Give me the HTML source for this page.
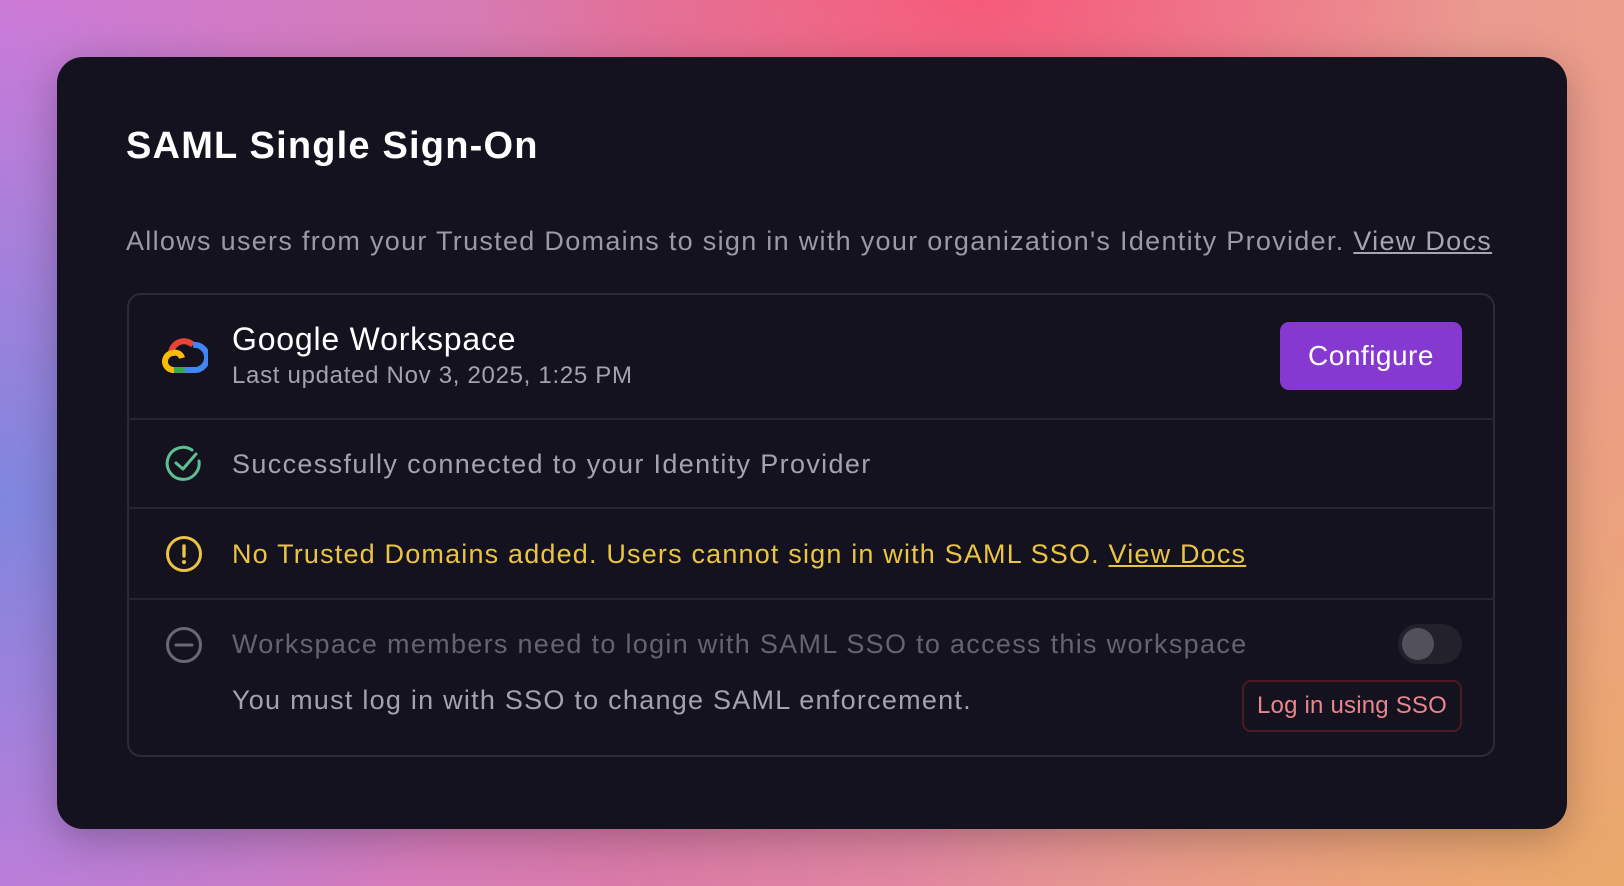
<!DOCTYPE html>
<html><head><meta charset="utf-8"><style>
*{margin:0;padding:0;box-sizing:border-box}
body{width:1624px;height:886px;overflow:hidden;font-family:"Liberation Sans",sans-serif;position:relative;
background:
radial-gradient(ellipse 500px 260px at 980px 0px,#f65a7a 0%,rgba(246,90,122,0) 100%),
radial-gradient(ellipse 700px 600px at 1624px 886px,#eaa86a 0%,rgba(234,168,106,0) 100%),
radial-gradient(ellipse 600px 500px at 0px 500px,#7f86de 0%,rgba(127,134,222,0) 100%),
linear-gradient(90deg,#cc7ad8 0%,#d97aa6 40%,#e6909a 70%,#ec9e8a 100%);}
.card{position:absolute;left:57px;top:57px;width:1510px;height:772px;background:#13121e;border-radius:26px;box-shadow:0 10px 40px rgba(0,0,0,.25)}
h1{position:absolute;left:126px;top:125px;font-size:38px;font-weight:bold;color:#fff;letter-spacing:1.2px}
.desc{position:absolute;left:126px;top:226px;font-size:27px;color:#9b99a8;white-space:nowrap;letter-spacing:1.3px}
.desc u{color:#a7a5b3}
.box{position:absolute;left:127px;top:293px;width:1368px;height:464px;border:2px solid #2c2b38;border-radius:14px}
.line{position:absolute;left:127px;width:1368px;height:2px;background:#25242f}
.t{position:absolute;white-space:nowrap}
.ic{position:absolute}
</style></head><body>
<div class="card"></div>
<h1>SAML Single Sign-On</h1>
<div class="desc">Allows users from your Trusted Domains to sign in with your organization's Identity Provider. <u>View Docs</u></div>
<div class="box"></div>
<div class="line" style="top:418px"></div>
<div class="line" style="top:507px"></div>
<div class="line" style="top:598px"></div>
<svg class="ic" style="left:160px;top:336px" width="48" height="40" viewBox="0 0 48 40">
<path d="M11 17 A13 13 0 0 1 33 9" stroke="#ea4335" stroke-width="6" fill="none"/>
<path d="M33 9 A11 11 0 0 1 36 34 L25 34" stroke="#4285f4" stroke-width="6" fill="none"/>
<path d="M25 34 L14 34" stroke="#34a853" stroke-width="6" fill="none"/>
<path d="M14 34 A8.5 8.5 0 0 1 13 17 A7 7 0 0 1 22 22" stroke="#fbbc05" stroke-width="6" fill="none"/>
</svg>
<div class="t" style="left:232px;top:321px;font-size:32px;color:#fff;letter-spacing:0.8px">Google Workspace</div>
<div class="t" style="left:232px;top:362px;font-size:24px;color:#a4a2b0;letter-spacing:0.7px">Last updated Nov 3, 2025, 1:25 PM</div>
<div style="position:absolute;left:1280px;top:322px;width:182px;height:68px;background:#8639d0;border-radius:9px;color:#fff;font-size:28px;line-height:68px;text-align:center;letter-spacing:0.5px">Configure</div>
<svg class="ic" style="left:164px;top:444px" width="40" height="40" viewBox="0 0 40 40"><path d="M35 17 A16 16 0 1 1 28 6" stroke="#5fbf93" stroke-width="3" fill="none" stroke-linecap="round"/><path d="M12 19 L19 25 L32 10" stroke="#5fbf93" stroke-width="3" fill="none" stroke-linecap="round" stroke-linejoin="round"/></svg>
<div class="t" style="left:232px;top:449px;font-size:27px;color:#a4a2b0;letter-spacing:1.35px">Successfully connected to your Identity Provider</div>
<svg class="ic" style="left:164px;top:535px" width="40" height="40" viewBox="0 0 40 40"><circle cx="20" cy="19" r="16.5" stroke="#ecc443" stroke-width="3" fill="none"/><path d="M20 11 V21" stroke="#ecc443" stroke-width="3.4" stroke-linecap="round"/><circle cx="20" cy="27" r="2" fill="#ecc443"/></svg>
<div class="t" style="left:232px;top:539px;font-size:27px;color:#ecc443;letter-spacing:1.18px">No Trusted Domains added. Users cannot sign in with SAML SSO. <u>View Docs</u></div>
<svg class="ic" style="left:164px;top:626px" width="40" height="40" viewBox="0 0 40 40"><circle cx="20" cy="19" r="16.5" stroke="#6a6875" stroke-width="3" fill="none"/><path d="M12 19 H28" stroke="#6a6875" stroke-width="3" stroke-linecap="round"/></svg>
<div class="t" style="left:232px;top:629px;font-size:27px;color:#65636f;letter-spacing:1.3px">Workspace members need to login with SAML SSO to access this workspace</div>
<div style="position:absolute;left:1398px;top:624px;width:64px;height:40px;border-radius:20px;background:#22212c"><div style="position:absolute;left:4px;top:4px;width:32px;height:32px;border-radius:50%;background:#52505b"></div></div>
<div class="t" style="left:232px;top:685px;font-size:27px;color:#a4a2b0;letter-spacing:1.25px">You must log in with SSO to change SAML enforcement.</div>
<div style="position:absolute;left:1242px;top:680px;width:220px;height:52px;border:2px solid #4b1a20;border-radius:9px;color:#e8868e;font-size:24px;line-height:48px;text-align:center;letter-spacing:0.2px">Log in using SSO</div>
</body></html>
